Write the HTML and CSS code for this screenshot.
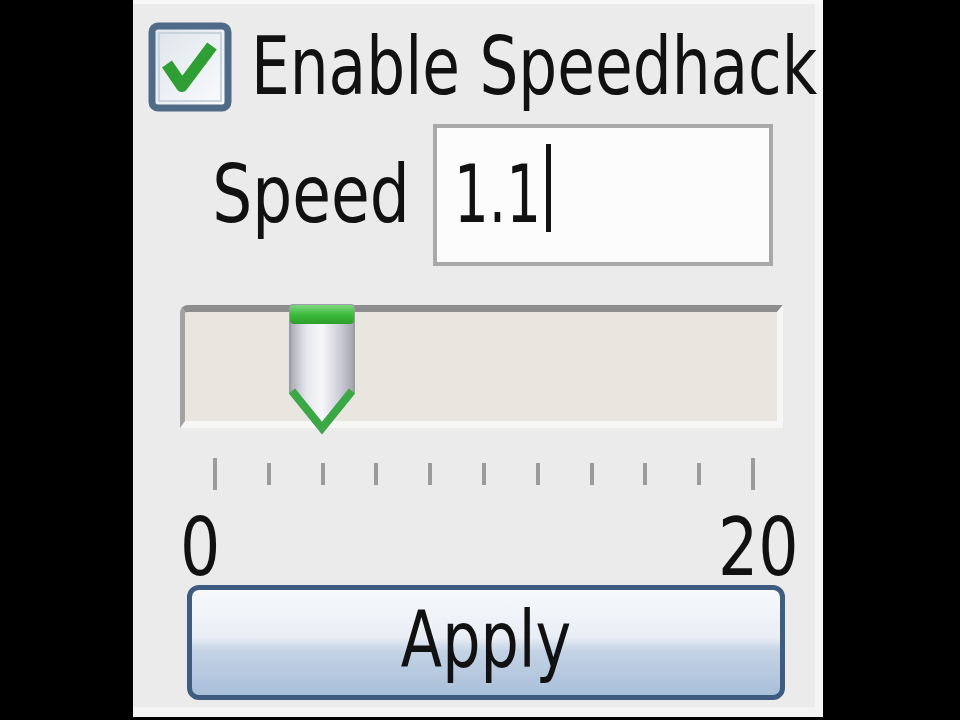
FILE: index.html
```html
<!DOCTYPE html>
<html lang="en">
<head>
    <meta charset="UTF-8">
    <title>Speedhack</title>
    <link rel="stylesheet" href="styles.css">
</head>
<body>

    <!-- Speedhack panel -->
    <div class="panel">
        <div class="row-enable">
            <svg class="checkbox" width="84" height="90" viewBox="0 0 84 90">
                <defs>
                    <linearGradient id="boxFill" x1="0" y1="0" x2="1" y2="1">
                        <stop offset="0" stop-color="#dde4ea"/>
                        <stop offset="1" stop-color="#fbfcfd"/>
                    </linearGradient>
                </defs>
                <rect x="4" y="4" width="76" height="82" rx="6" fill="url(#boxFill)" stroke="#4f6b88" stroke-width="7"/>
                <rect x="11" y="11" width="62" height="68" fill="none" stroke="#c9d3dc" stroke-width="2"/>
                <path d="M19 42 L34 64 L64 24" fill="none" stroke="#2f9e35" stroke-width="12" stroke-linejoin="round"/>
            </svg>
            <span class="label-enable">Enable Speedhack</span>
        </div>

        <div class="row-speed">
            <div class="label-speed"><span>Speed</span></div>
            <div class="speed-box"><span class="speed-value">1.1</span><span class="caret"></span></div>
        </div>

        <div class="track">
            <svg class="thumb" width="70" height="136" viewBox="0 0 70 136">
                <defs>
                    <linearGradient id="thumbBody" x1="0" y1="0" x2="1" y2="0">
                        <stop offset="0" stop-color="#a9a9b3"/>
                        <stop offset="0.25" stop-color="#e6e6ee"/>
                        <stop offset="0.5" stop-color="#f7f7fb"/>
                        <stop offset="0.8" stop-color="#c9c9d3"/>
                        <stop offset="1" stop-color="#a3a3ae"/>
                    </linearGradient>
                    <linearGradient id="thumbCap" x1="0" y1="0" x2="0" y2="1">
                        <stop offset="0" stop-color="#7fd67f"/>
                        <stop offset="0.5" stop-color="#3cbc3c"/>
                        <stop offset="1" stop-color="#2a9e2a"/>
                    </linearGradient>
                </defs>
                <path d="M6 4 H64 Q67 4 67 8 V92 L35 132 L3 92 V8 Q3 4 6 4 Z" fill="url(#thumbBody)" stroke="#9c9ca8" stroke-width="2"/>
                <rect x="3" y="4" width="64" height="19" rx="4" fill="url(#thumbCap)"/>
                <path d="M5 90 L35 127 L65 90" fill="none" stroke="#3aa845" stroke-width="8" stroke-linejoin="miter"/>
            </svg>
        </div>

        <div class="ticks">
            <span class="tick long"></span>
            <span class="tick"></span>
            <span class="tick"></span>
            <span class="tick"></span>
            <span class="tick"></span>
            <span class="tick"></span>
            <span class="tick"></span>
            <span class="tick"></span>
            <span class="tick"></span>
            <span class="tick"></span>
            <span class="tick long"></span>
        </div>

        <div class="scale">
            <span class="scale-min">0</span>
            <span class="scale-max">20</span>
        </div>

        <button class="apply"><span>Apply</span></button>
    </div>

</body>
</html>
```

FILE: styles.css
```css
/* Reset */
* {
    margin: 0;
    padding: 0;
    box-sizing: border-box;
}

body {
    background-color: #000;
    width: 960px;
    height: 720px;
    overflow: hidden;
    display: flex;
    font-family: "DejaVu Sans Condensed", "DejaVu Sans", sans-serif;
    color: #111;
}

/* Panel */
.panel {
    margin-left: 133px;
    width: 690px;
    height: 717px;
    background-color: #ebebeb;
    box-shadow: inset 0 4px #f7f7f7, inset -8px 0 #f5f5f5, inset 0 -10px #f4f4f4;
    display: flex;
    flex-direction: column;
    overflow: hidden;
    padding-top: 22px;
}

/* Enable row */
.row-enable {
    display: flex;
    align-items: center;
    padding-left: 15px;
    height: 90px;
}

.checkbox {
    flex-shrink: 0;
}

.label-enable {
    display: inline-block;
    font-size: 80px;
    line-height: 82px;
    margin-left: 19px;
    white-space: nowrap;
    transform: scaleX(0.852);
    transform-origin: left center;
}

/* Speed row */
.row-speed {
    display: flex;
    align-items: center;
    margin-top: 12px;
    height: 142px;
}

.label-speed {
    width: 277px;
    text-align: right;
    font-size: 80px;
    line-height: 82px;
}

.label-speed span {
    display: inline-block;
    transform: scaleX(0.875);
    transform-origin: right center;
}

.speed-box {
    margin-left: 23px;
    width: 340px;
    height: 142px;
    background-color: #fcfcfc;
    border: 4px solid #a9a9a9;
    display: flex;
    align-items: center;
    padding-left: 17px;
    font-size: 80px;
    line-height: 82px;
}

.speed-value {
    display: inline-block;
    transform: scaleX(0.76);
    transform-origin: left center;
}

.caret {
    display: inline-block;
    width: 5px;
    height: 88px;
    background-color: #111;
    margin-left: -22px;
    margin-bottom: 14px;
}

/* Slider track */
.track {
    position: relative;
    margin-top: 39px;
    margin-left: 47px;
    width: 603px;
    height: 123px;
    background-color: #e8e6de;
    border-top: 7px solid #8d8d8d;
    border-left: 5px solid #a2a2a2;
    border-right: 6px solid #f6f6f4;
    border-bottom: 7px solid #f6f6f4;
    border-top-left-radius: 8px;
}

.thumb {
    position: absolute;
    left: 102px;
    top: -11px;
}

/* Ticks */
.ticks {
    display: flex;
    justify-content: space-between;
    align-items: center;
    margin-top: 30px;
    margin-left: 80px;
    width: 542px;
    height: 32px;
}

.tick {
    width: 4px;
    height: 22px;
    background-color: #9b9b9b;
}

.tick.long {
    height: 32px;
}

/* Scale labels */
.scale {
    display: flex;
    justify-content: space-between;
    margin-top: 25px;
    margin-left: 47px;
    width: 619px;
    font-size: 80px;
    line-height: 66px;
}

.scale span {
    display: inline-block;
    transform: scaleX(0.88);
}

.scale-min {
    transform-origin: left center;
}

.scale-max {
    transform-origin: right center;
}

/* Apply button */
.apply {
    margin-top: 4px;
    margin-left: 54px;
    width: 598px;
    height: 115px;
    border: 5px solid #3e5c80;
    border-radius: 12px;
    background: linear-gradient(to bottom, #f7f9fb 0%, #e9eef5 45%, #c4d3e5 58%, #a9bfd9 100%);
    font-family: inherit;
    font-size: 78px;
    line-height: 78px;
    color: #111;
    padding-bottom: 6px;
}

.apply span {
    display: inline-block;
    transform: scaleX(0.86);
}
```
